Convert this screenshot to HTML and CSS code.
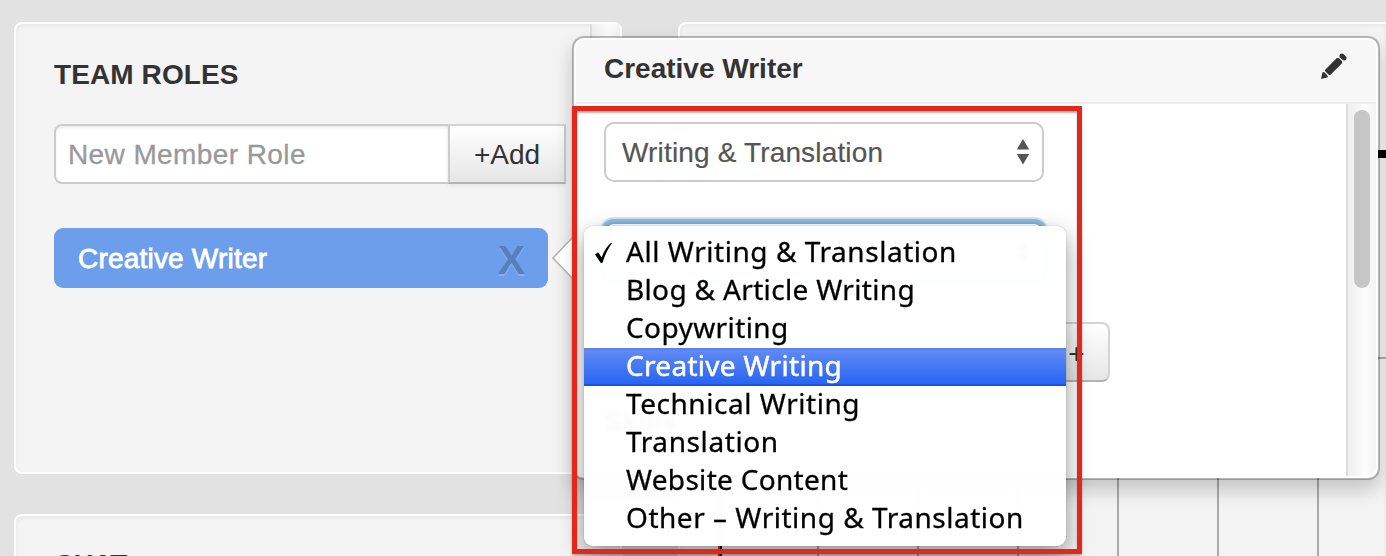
FILE: index.html
```html
<!DOCTYPE html>
<html lang="en">
<head>
<meta charset="utf-8">
<title>Team Roles</title>
<link rel="stylesheet" href="styles.css">
</head>
<body>
<main class="page">
  <div class="sidebar">
    <section class="panel roles">
      <div class="roles-main">
        <h2 class="panel-title">TEAM ROLES</h2>
        <div class="add-row">
          <div class="input">New Member Role</div>
          <div class="add-button">+Add</div>
        </div>
        <div class="role"><span class="role-name">Creative Writer</span><span class="role-remove">X</span></div>
      </div>
      <div class="track"></div>
    </section>
    <section class="panel chat"><h2 class="panel-title">CHAT</h2></section>
  </div>
  <section class="panel chart">
    <svg class="chart-grid" width="706" height="532" viewBox="680 24 706 532">
      <path d="M818 154V556M918 154V556M1018 154V556M1118 154V556M1218 154V556M1318 154V556M720 358H1386" stroke="#aaa" stroke-width="2"/>
      <path d="M719 154V556" stroke="#e2261a" stroke-width="2"/>
      <path d="M721 154V556" stroke="#000" stroke-width="2"/>
      <path d="M1300 154H1386" stroke="#000" stroke-width="8"/>
    </svg>
  </section>
</main>

<aside class="popover">
  <svg class="popover-arrow" width="24" height="44" viewBox="0 0 24 44"><path d="M22 1L2 22L22 43" fill="#fff" stroke="#b3b3b3" stroke-width="1.6"/></svg>
  <div class="popover-inner">
    <header class="popover-head">
      <h3 class="popover-title">Creative Writer</h3>
      <svg class="pencil" width="28" height="28" viewBox="0 0 28 28" fill="#333"><path d="M1 27L2.4 20.6Q3.4 19.4 4.6 20.6L7.4 23.4Q8.6 24.8 7.2 25.6ZM5.4 17.4L16.6 6.2Q17.8 5.2 19 6.2L21.8 9Q23 10.2 21.8 11.4L10.8 22.4Q9.6 23.4 8.4 22.4L5.4 19.6Q4.4 18.5 5.4 17.4Z"/><path d="M19.4 4.4Q19.4 1.6 22 1.6Q23.4 1.6 24.8 3.2Q26.6 4.8 26.6 6.2Q26.4 8.8 23.8 8.6Q23 8.6 21.2 6.8Q19.4 5.4 19.4 4.4Z"/></svg>
    </header>
    <div class="popover-body">
      <div class="form">
        <div class="select"><span>Writing &amp; Translation</span><svg width="14" height="26" viewBox="0 0 14 26" fill="#555"><path d="M7 0L13.2 10.5H.8ZM.8 15H13.2L7 25.5Z"/></svg></div>
        <div class="select focused"><svg width="14" height="26" viewBox="0 0 14 26" fill="#555"><path d="M7 0L13.2 10.5H.8ZM.8 15H13.2L7 25.5Z"/></svg></div>
        <div class="skill-row"><div class="skill-input"></div><div class="plus">+</div></div>
        <div class="skills-label">Skills</div>
      </div>
      <div class="track"><div class="thumb"></div></div>
    </div>
  </div>
</aside>

<ul class="menu">
  <li class="l1"><svg class="check" width="18" height="22" viewBox="0 0 18 22"><path d="M0 12.5L3.2 10.2L6.6 15.5Q10 6 15.8 1H17.2Q11 9 7.4 21H5.8Z"/></svg>All Writing &amp; Translation</li>
  <li class="l2">Blog &amp; Article Writing</li>
  <li class="l3">Copywriting</li>
  <li class="l4 active">Creative Writing</li>
  <li class="l5">Technical Writing</li>
  <li class="l6">Translation</li>
  <li class="l7">Website Content</li>
  <li class="l8">Other – Writing &amp; Translation</li>
</ul>
<div class="highlight"></div>
</body>
</html>
```
FILE: styles.css
```css
* { box-sizing: border-box; }
body {
  margin: 0;
  width: 1386px;
  height: 556px;
  overflow: hidden;
  position: relative;
  background: #e2e2e2;
  font: 28px/36px "Liberation Sans", Arial, sans-serif;
  color: #333;
}
h2, h3 { margin: 0; font-size: 28px; line-height: 36px; font-weight: bold; }

.page {
  display: grid;
  grid-template-columns: 608px 708px;
  column-gap: 56px;
  height: 556px;
  padding: 22px 0 0 14px;
  overflow: hidden;
}
.sidebar { display: flex; flex-direction: column; gap: 40px; }
.panel {
  background: #f4f4f4;
  border: 2px solid #fff;
  border-radius: 8px;
  box-shadow: inset 0 2px 4px rgba(0, 0, 0, .06);
}
.roles { display: flex; height: 452px; flex: none; }
.roles-main { width: 576px; padding: 33px 22px 0 38px; }
.roles-main .panel-title { letter-spacing: .1px; }
.chat { height: 120px; flex: none; padding: 31px 38px; }
.chat .panel-title { letter-spacing: -.8px; }
.chart { height: 560px; border-right: 0; overflow: hidden; border-radius: 8px 0 0 0; }
.chart-grid { display: block; }
.track {
  width: 30px;
  border-left: 2px solid #ddd;
  background: linear-gradient(90deg, #efefef, #fcfcfc 60%, #f3f3f3);
}

.add-row { display: flex; width: 512px; margin-top: 31px; }
.input {
  width: 396px;
  height: 60px;
  padding: 11px 12px;
  background: #fff;
  border: 2px solid #ccc;
  border-radius: 8px 0 0 8px;
  box-shadow: inset 0 2px 3px rgba(0, 0, 0, .075);
  color: #999;
  letter-spacing: .4px;
  -webkit-text-stroke: .3px #999;
}
.add-button {
  width: 118px;
  height: 60px;
  margin-left: -2px;
  padding-top: 11px;
  text-align: center;
  border: 2px solid #ccc;
  border-color: #d6d6d6 #ccc #b3b3b3 #ccc;
  background: linear-gradient(#fff, #e6e6e6);
  box-shadow: 0 2px 4px rgba(0, 0, 0, .06);
}
.role {
  display: flex;
  justify-content: space-between;
  align-items: center;
  width: 494px;
  height: 60px;
  margin-top: 44px;
  padding: 0 23px 0 24px;
  border-radius: 9px;
  background: #6d9eeb;
}
.role-name { color: #fff; -webkit-text-stroke: .8px #fff; letter-spacing: .2px; padding-top: 2px; }
.role-remove {
  font-size: 41px;
  font-weight: bold;
  color: #567fbc;
  text-shadow: 0 2px 0 #88b1f0;
  padding-top: 4px;
}

.popover {
  position: absolute;
  left: 572px;
  top: 36px;
  width: 808px;
  height: 444px;
  padding: 2px;
  border: 2px solid rgba(0, 0, 0, .25);
  border-radius: 12px;
  background: #fff;
  background-clip: padding-box;
  box-shadow: 0 10px 20px rgba(0, 0, 0, .2);
}
.popover-arrow { position: absolute; left: -23px; top: 198px; }
.popover-inner { display: flex; flex-direction: column; height: 436px; border-radius: 8px; overflow: hidden; }
.popover-head {
  display: flex;
  justify-content: space-between;
  height: 64px;
  padding: 11px 28px 0 28px;
  background: #f7f7f7;
  border-bottom: 2px solid #ebebeb;
}
.pencil { margin-top: 1px; }
.popover-body { display: flex; justify-content: space-between; flex: 1; }
.form { padding: 18px 0 0 28px; }
.select {
  display: flex;
  justify-content: space-between;
  align-items: center;
  width: 440px;
  height: 60px;
  margin-bottom: 40px;
  padding: 0 12px 0 16px;
  border: 2px solid #ccc;
  border-radius: 10px;
  background: #fff;
  color: #555;
}
.select span { padding-top: 2px; letter-spacing: .16px; -webkit-text-stroke: .2px #555; }
.focused { justify-content: flex-end; border-color: #83afd9; box-shadow: 0 0 0 3px #8fbbe6, 0 0 0 5px #d3e3f4; }
.skill-row { display: flex; width: 506px; height: 60px; }
.skill-input { width: 440px; border: 2px solid #ddd; border-radius: 8px 0 0 8px; }
.plus {
  width: 68px;
  margin-left: -2px;
  padding: 12px 0 0 1px;
  text-align: center;
  border: 2px solid #d4d4d4;
  border-bottom-color: #b3b3b3;
  border-radius: 0 8px 8px 0;
  background: linear-gradient(#fff, #e6e6e6);
}
.skills-label { margin-top: 22px; font-weight: bold; }
.thumb { width: 16px; height: 178px; margin: 6px 0 0 6px; border-radius: 8px; background: #c6c6c6; }

.menu {
  position: absolute;
  left: 584px;
  top: 226px;
  width: 482px;
  height: 320px;
  margin: 0;
  padding: 8px 0;
  list-style: none;
  border-radius: 9px;
  background: rgba(255, 255, 255, .975);
  backdrop-filter: blur(2px);
  box-shadow: 0 0 1px rgba(0, 0, 0, .5), 0 10px 24px rgba(0, 0, 0, .4);
  font: 28px/38px "Noto Sans", sans-serif;
  color: #000;
  -webkit-text-stroke: .3px #000;
}
.menu li { position: relative; height: 38px; padding-left: 42px; line-height: 35px; white-space: nowrap; }
.l1 { letter-spacing: .55px; }
.l2 { letter-spacing: .34px; }
.l3 { letter-spacing: .4px; }
.l4 { letter-spacing: .3px; }
.l5 { letter-spacing: .55px; }
.l6 { letter-spacing: .6px; }
.l7 { letter-spacing: .3px; }
.l8 { letter-spacing: .52px; }
.menu .active {
  color: #fff;
  -webkit-text-stroke: .5px #fff;
  background: linear-gradient(#648cf5, #2563f2);
  box-shadow: inset 0 2px 0 #5a82e8, inset 0 -2px 0 #1655e4;
}
.check { position: absolute; left: 11px; top: 8px; }

.highlight {
  position: absolute;
  left: 572px;
  top: 106px;
  width: 510px;
  height: 448px;
  border: 5px solid #e3271a;
  box-shadow: 0 2px 2px rgba(0, 0, 0, .25), inset 0 2px 2px rgba(0, 0, 0, .3);
}
```
